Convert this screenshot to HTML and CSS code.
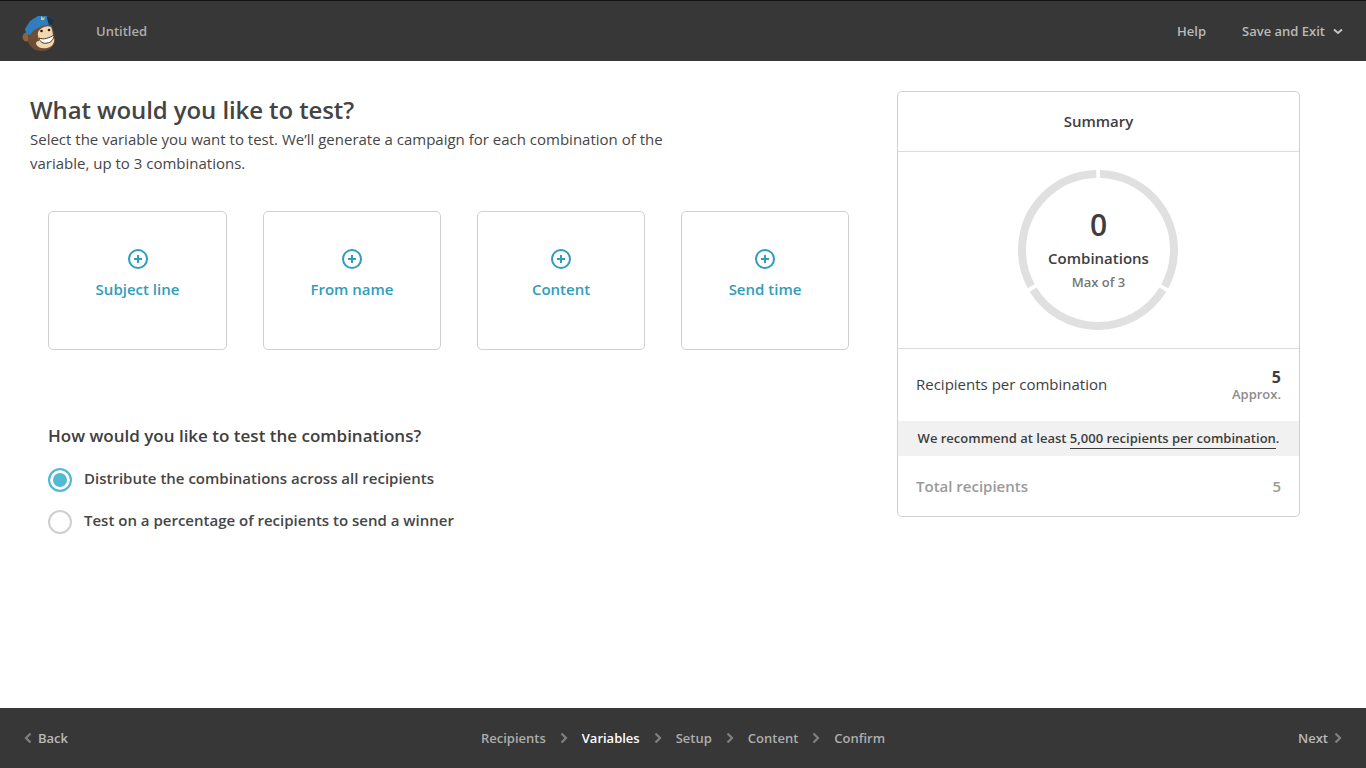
FILE: index.html
```html
<!DOCTYPE html>
<html lang="en">
<head>
  <meta charset="UTF-8">
  <title>What would you like to test?</title>
  <link rel="stylesheet" href="styles.css">
</head>
<body>

<header class="topbar">
  <div class="topbar-left">
    <svg class="logo" width="36" height="38" viewBox="0 0 36 38">
      <circle cx="5" cy="23" r="4.500" fill="#8a6244"/>
      <path d="M6 18C9 12 20 8 29 11c3 5 3 9 4 13 1 7-5 13-13 13C12 37 7 32 6 27z" fill="#6f4c34"/>
      <path d="M16 18c3-5 9-7 13-5 2 4 1 7 3 11 1 5-2 9-7 10-5 1-9 0-11-4 0-2 1-3 3-3 0-3-2-6-1-9z" fill="#f0d8b0"/>
      <path d="M3 15L8 7l8-5h9l6 3v5l-11 2-8 4-4 5-4-2z" fill="#2f7fc0"/>
      <path d="M25 2l6 3v5l-4 1c-1-3-2-6-2-9z" fill="#1f3140"/>
      <path d="M19 2l2 2 2-1-1 3-3 0z" fill="#e8c544"/>
      <path d="M17 24c5 2 10 0 15-3 0 4-3 8-7 8-4 1-7-1-8-5z" fill="#fff" stroke="#4a3322" stroke-width="1"/>
      <circle cx="19.500" cy="17" r="1.300" fill="#2a1c12"/>
      <circle cx="27" cy="16" r="1.300" fill="#2a1c12"/>
    </svg>
    <span class="doc-title">Untitled</span>
  </div>
  <nav class="topbar-right">
    <a class="bar-link">Help</a>
    <a class="bar-link">Save and Exit
      <svg class="chev-down" width="10" height="7" viewBox="0 0 10 7"><path d="M1 1.500l4 3.500 4-3.500" fill="none" stroke="#c4c4c4" stroke-width="2"/></svg>
    </a>
  </nav>
</header>

<main class="page">
  <section class="left">
    <h1>What would you like to test?</h1>
    <p class="intro">Select the variable you want to test. We’ll generate a campaign for each combination of the variable, up to 3 combinations.</p>

    <div class="options">
      <a class="option">
        <svg width="20" height="20" viewBox="0 0 20 20"><circle cx="10" cy="10" r="9" fill="none" stroke="#2f9dbb" stroke-width="2"/><path d="M10 6v8M6 10h8" stroke="#2f9dbb" stroke-width="2"/></svg>
        <span>Subject line</span>
      </a>
      <a class="option">
        <svg width="20" height="20" viewBox="0 0 20 20"><circle cx="10" cy="10" r="9" fill="none" stroke="#2f9dbb" stroke-width="2"/><path d="M10 6v8M6 10h8" stroke="#2f9dbb" stroke-width="2"/></svg>
        <span>From name</span>
      </a>
      <a class="option">
        <svg width="20" height="20" viewBox="0 0 20 20"><circle cx="10" cy="10" r="9" fill="none" stroke="#2f9dbb" stroke-width="2"/><path d="M10 6v8M6 10h8" stroke="#2f9dbb" stroke-width="2"/></svg>
        <span>Content</span>
      </a>
      <a class="option">
        <svg width="20" height="20" viewBox="0 0 20 20"><circle cx="10" cy="10" r="9" fill="none" stroke="#2f9dbb" stroke-width="2"/><path d="M10 6v8M6 10h8" stroke="#2f9dbb" stroke-width="2"/></svg>
        <span>Send time</span>
      </a>
    </div>

    <div class="method">
      <h3>How would you like to test the combinations?</h3>
      <div class="radio-row"><span class="radio checked"></span>Distribute the combinations across all recipients</div>
      <div class="radio-row"><span class="radio"></span>Test on a percentage of recipients to send a winner</div>
    </div>
  </section>

  <aside class="summary">
    <div class="summary-head">Summary</div>
    <div class="summary-ring">
      <div class="ring">
        <svg width="160" height="160" viewBox="0 0 160 160">
          <circle class="ring-track" cx="80" cy="80" r="76" pathLength="300" stroke-dasharray="97.600 2.400" transform="rotate(-88.500 80 80)"/>
        </svg>
        <div class="ring-text">
          <div class="ring-num">0</div>
          <div class="ring-label">Combinations</div>
          <div class="ring-max">Max of 3</div>
        </div>
      </div>
    </div>
    <div class="summary-row">
      <span class="row-label">Recipients per combination</span>
      <div class="row-value"><b>5</b><small>Approx.</small></div>
    </div>
    <div class="recommend">We recommend at least <u>5,000 recipients per combination</u>.</div>
    <div class="summary-total">
      <span>Total recipients</span>
      <span>5</span>
    </div>
  </aside>
</main>

<footer class="bottombar">
  <a class="bar-link back"><svg width="8" height="12" viewBox="0 0 8 12"><path d="M6.500 1.500L2 6l4.500 4.500" fill="none" stroke="#808080" stroke-width="2.200"/></svg>Back</a>
  <nav class="steps">
    <a>Recipients</a>
    <svg width="8" height="12" viewBox="0 0 8 12"><path d="M1.500 1.500L6 6l-4.500 4.500" fill="none" stroke="#808080" stroke-width="2.200"/></svg>
    <a class="current">Variables</a>
    <svg width="8" height="12" viewBox="0 0 8 12"><path d="M1.500 1.500L6 6l-4.500 4.500" fill="none" stroke="#808080" stroke-width="2.200"/></svg>
    <a>Setup</a>
    <svg width="8" height="12" viewBox="0 0 8 12"><path d="M1.500 1.500L6 6l-4.500 4.500" fill="none" stroke="#808080" stroke-width="2.200"/></svg>
    <a>Content</a>
    <svg width="8" height="12" viewBox="0 0 8 12"><path d="M1.500 1.500L6 6l-4.500 4.500" fill="none" stroke="#808080" stroke-width="2.200"/></svg>
    <a>Confirm</a>
  </nav>
  <a class="bar-link next">Next<svg width="8" height="12" viewBox="0 0 8 12"><path d="M1.500 1.500L6 6l-4.500 4.500" fill="none" stroke="#808080" stroke-width="2.200"/></svg></a>
</footer>

</body>
</html>
```

FILE: styles.css
```css
* {
  box-sizing: border-box;
}

body {
  margin: 0;
  height: 768px;
  display: flex;
  flex-direction: column;
  font-family: "Open Sans", sans-serif;
  color: #3e3e3e;
  background: #fff;
  overflow: hidden;
}

/* bars */
.topbar {
  height: 61px;
  flex: none;
  display: flex;
  align-items: center;
  justify-content: space-between;
  background: #373737;
  border-top: 1px solid #111;
  padding: 0 23px 0 22px;
}

.topbar-left {
  display: flex;
  align-items: center;
}

.logo {
  margin-right: 38px;
  margin-top: 3px;
}

.doc-title {
  font-size: 13px;
  font-weight: 600;
  color: #adadad;
}

.topbar-right {
  display: flex;
  gap: 36px;
}

.bar-link {
  font-size: 13px;
  font-weight: 600;
  color: #b9b9b9;
  display: flex;
  align-items: center;
}

.chev-down {
  margin-left: 8px;
}

.bottombar {
  height: 60px;
  flex: none;
  display: flex;
  align-items: center;
  justify-content: space-between;
  background: #373737;
  padding: 0 24px;
}

.back svg {
  margin-right: 6px;
}

.next svg {
  margin-left: 6px;
}

.steps {
  display: flex;
  align-items: center;
  gap: 14px;
  font-size: 13px;
  font-weight: 600;
  color: #adadad;
}

.steps .current {
  color: #fff;
}

/* main */
.page {
  flex: 1;
  display: flex;
  align-items: flex-start;
  padding: 30px 66px 0 30px;
  justify-content: space-between;
}

.left {
  width: 819px;
}

h1 {
  margin: 2px 0 0;
  font-size: 24px;
  line-height: 34px;
  font-weight: 600;
  letter-spacing: -0.100px;
  color: #444;
}

.intro {
  margin: 0;
  width: 660px;
  font-size: 15px;
  line-height: 24px;
  color: #464646;
}

.options {
  display: grid;
  grid-template-columns: 179px 178px 168px 168px;
  column-gap: 36px;
  margin: 36px 0 0 18px;
}

.option {
  height: 139px;
  border: 1px solid #d0d0d0;
  border-radius: 5px;
  display: flex;
  flex-direction: column;
  align-items: center;
  padding-top: 37px;
  font-size: 15px;
  font-weight: 600;
  color: #2f9dbb;
}

.option span {
  margin-top: 10px;
}

.method {
  margin: 74px 0 0 18px;
}

.method h3 {
  margin: 0 0 9px;
  font-size: 17px;
  line-height: 24px;
  font-weight: 600;
  color: #404040;
}

.radio-row {
  display: flex;
  align-items: center;
  height: 42px;
  font-size: 15px;
  font-weight: 600;
  color: #464646;
}

.radio {
  width: 24px;
  height: 24px;
  margin-right: 12px;
  margin-top: 4px;
  border: 2px solid #cfcfcf;
  border-radius: 50%;
  background: #fff;
}

.radio.checked {
  border-color: #52bad5;
  background: #52bad5;
  box-shadow: inset 0 0 0 3px #fff;
}

/* summary card */
.summary {
  width: 403px;
  height: 426px;
  border: 1px solid #d0d0d0;
  border-radius: 5px;
  overflow: hidden;
}

.summary-head {
  height: 60px;
  line-height: 59px;
  text-align: center;
  font-size: 15px;
  font-weight: 600;
  border-bottom: 1px solid #dcdcdc;
}

.summary-ring {
  height: 197px;
  display: flex;
  justify-content: center;
  padding: 18px 1px 0 0;
  border-bottom: 1px solid #dcdcdc;
}

.ring {
  position: relative;
  width: 160px;
  height: 160px;
}

.ring-track {
  fill: none;
  stroke: #e0e0e0;
  stroke-width: 8;
}

.ring-text {
  position: absolute;
  top: 0;
  left: 0;
  width: 161px;
  text-align: center;
}

.ring-num {
  margin-top: 35px;
  font-size: 30px;
  line-height: 40px;
  font-weight: 600;
}

.ring-label {
  margin-top: 1px;
  font-size: 15px;
  line-height: 24px;
  font-weight: 600;
}

.ring-max {
  font-size: 13px;
  line-height: 24px;
  font-weight: 600;
  color: #777;
}

.summary-row {
  height: 72px;
  display: flex;
  align-items: center;
  justify-content: space-between;
  padding: 0 18px;
  font-size: 15px;
}

.row-label {
  margin-bottom: 2px;
}

.row-value {
  text-align: right;
  display: flex;
  flex-direction: column;
  padding-top: 1px;
}

.row-value b {
  font-size: 16px;
  line-height: 16px;
  font-weight: 700;
}

.row-value small {
  font-size: 13px;
  line-height: 16px;
  margin-top: 1px;
  font-weight: 600;
  color: #8c8c8c;
}

.recommend {
  height: 35px;
  line-height: 35px;
  text-align: center;
  background: #f1f1f1;
  font-size: 13px;
  font-weight: 600;
  white-space: nowrap;
}

.recommend u {
  text-decoration: none;
  border-bottom: 1px solid #3e3e3e;
  padding-bottom: 1px;
}

.summary-total {
  height: 61px;
  display: flex;
  align-items: center;
  justify-content: space-between;
  padding: 0 18px 2px;
  font-size: 15px;
  font-weight: 600;
  color: #9a9a9a;
}
```
